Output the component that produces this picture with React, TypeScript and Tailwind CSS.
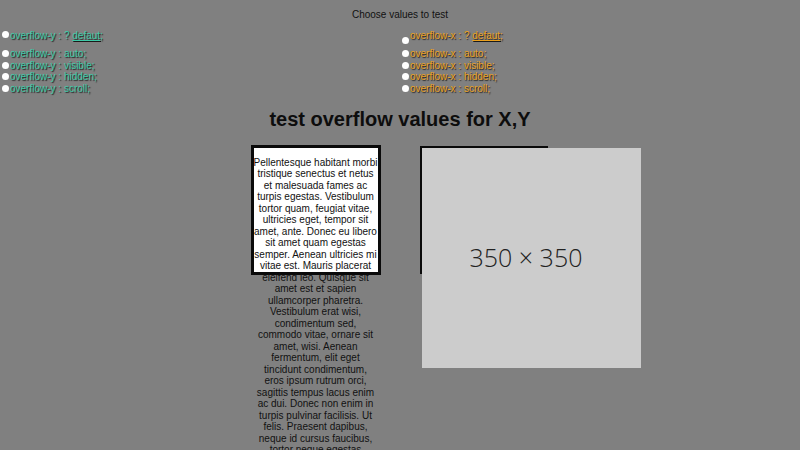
import * as React from "react";

const LOREM =
  "Pellentesque habitant morbi tristique senectus et netus et malesuada fames ac turpis egestas. Vestibulum tortor quam, feugiat vitae, ultricies eget, tempor sit amet, ante. Donec eu libero sit amet quam egestas semper. Aenean ultricies mi vitae est. Mauris placerat eleifend leo. Quisque sit amet est et sapien ullamcorper pharetra. Vestibulum erat wisi, condimentum sed, commodo vitae, ornare sit amet, wisi. Aenean fermentum, elit eget tincidunt condimentum, eros ipsum rutrum orci, sagittis tempus lacus enim ac dui. Donec non enim in turpis pulvinar facilisis. Ut felis. Praesent dapibus, neque id cursus faucibus, tortor neque egestas augue, eu vulputate magna eros eu erat. Aliquam erat volutpat. Nam dui mi, tincidunt quis, accumsan porttitor, facilisis luctus, metus.";

const VALUES = ["auto", "visible", "hidden", "scroll"];

function Radio({ className = "" }: { className?: string }) {
  return (
    <span
      className={`ml-[2px] block h-[7px] w-[7px] shrink-0 rounded-full bg-white ${className}`}
    />
  );
}

function OptionColumn({ axis, color, firstRadio }: { axis: string; color: string; firstRadio: string }) {
  return (
    <div className={`flex w-1/2 flex-col ${color} [text-shadow:1px_1px_1px_#1a1a1a]`}>
      <div className="mt-[9.5px] flex h-[11.5px] items-center">
        <Radio className={firstRadio} />
        <span className="ml-[1px]">
          overflow-{axis} : ? <span className="underline">defaut</span>;
        </span>
      </div>
      <div className="mt-[6.5px] flex flex-col">
        {VALUES.map((v) => (
          <label key={v} className="flex h-[11.5px] items-center">
            <Radio />
            <span className="ml-[1px]">
              overflow-{axis} : {v};
            </span>
          </label>
        ))}
      </div>
    </div>
  );
}

export default function App() {
  return (
    <div className="h-[450px] w-full overflow-hidden bg-[#808080] font-['Liberation_Sans',Arial,sans-serif] text-[10px] leading-[11.5px] text-[#111]">
      <div className="pt-[9px] text-center">Choose values to test</div>

      <div className="flex">
        <OptionColumn axis="y" color="text-[#3fcaa8]" firstRadio="mb-[2px]" />
        <OptionColumn axis="x" color="text-[#eba11f]" firstRadio="mt-[9px]" />
      </div>

      <h1 className="mt-[14px] text-center text-[20px] font-bold leading-[23px] text-[#0d0d0d]">
        test overflow values for X,Y
      </h1>

      <div className="mt-[13.5px] flex items-start justify-center gap-[39px] pr-[2px]">
        <div className="box-content h-[124px] w-[124px] shrink-0 border-[3px] border-[#0a0a0a] bg-white">
          <p className="mt-[9px] text-center">{LOREM}</p>
        </div>

        <div className="mt-[1px] box-content h-[124px] w-[124px] shrink-0 border-2 border-[#0a0a0a]">
          <div className="flex h-[220px] w-[219px] items-center justify-center bg-[#cccccc] pr-[10px] font-['Open_Sans',sans-serif] text-[25px] font-light leading-none text-[#222]">
            350 × 350
          </div>
        </div>
      </div>
    </div>
  );
}
